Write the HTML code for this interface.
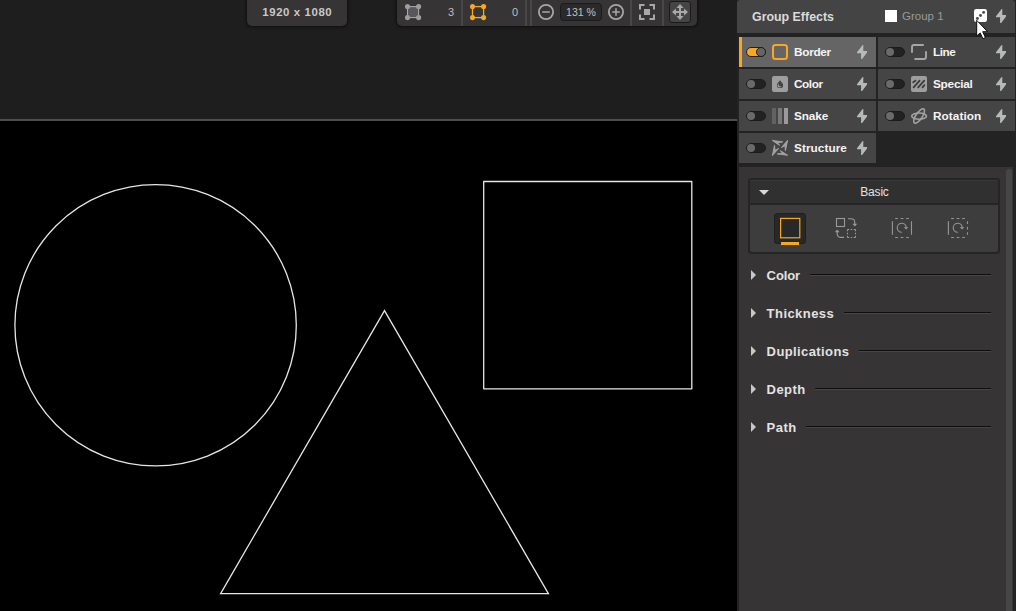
<!DOCTYPE html>
<html>
<head>
<meta charset="utf-8">
<title>Group Effects</title>
<style>
html,body{margin:0;padding:0;}
body{width:1016px;height:611px;overflow:hidden;background:#1e1e1e;position:relative;font-family:"Liberation Sans",sans-serif;}
.abs{position:absolute;}
#canvas{left:0;top:121px;width:737px;height:490px;background:#000;}
#canvasline{left:0;top:119px;width:737px;height:2px;background:#4e4e4e;}
#shapes{left:0;top:0;width:737px;height:611px;}
#respill{left:247px;top:-4px;width:100px;height:29.5px;background:#363435;border-radius:5px;box-shadow:0 0 3px 1px rgba(0,0,0,.55);color:#c8c8c8;font-weight:bold;font-size:11.4px;letter-spacing:0.6px;text-indent:0.6px;text-align:center;line-height:32px;}
#toolbar{left:397px;top:-4px;width:300px;height:29.5px;background:#363435;border-radius:5px;box-shadow:0 0 3px 1px rgba(0,0,0,.55);}
.tdiv{position:absolute;top:0;width:2px;height:25.5px;background:#484848;}
.tnum{position:absolute;top:0;height:24px;line-height:24.5px;font-size:11px;color:#bebebe;text-align:right;}
#zoomfield{left:560px;top:3px;width:40px;height:15.5px;border:1px solid #1a1a1a;background:#2a2a2a;border-radius:3.5px;color:#c0c0c0;font-size:10.5px;text-align:center;line-height:16.5px;}
#movebtn{left:669px;top:1px;width:19.5px;height:19.5px;border:1px solid #1a1a1a;background:#454545;border-radius:3px;}
/* right panel */
#panel{left:737px;top:0;width:279px;height:611px;background:#232323;}
#phead{left:737px;top:0;width:277.6px;height:33px;background:#444444;border-radius:3px 3px 0 0;}
.cell{position:absolute;height:30px;background:#454545;}
.cell.l{left:739px;width:137px;}
.cell.r{left:878px;width:136.6px;}
.cell.sel{background:#656565;}
.cell.sel:before{content:"";position:absolute;left:0;top:0;width:3px;height:30px;background:#f7a81f;}
.tog{position:absolute;left:7px;top:10px;width:18px;height:8px;border:1px solid #1c1c1c;background:#222;border-radius:6px;}
.tog i{position:absolute;left:0;top:0;width:8px;height:8px;border-radius:50%;background:#6a6a6a;}
.tog.on{background:#f7a81f;border-color:#2a2018;}
.tog.on i{left:auto;right:-1px;top:-1px;background:#656565;border:1px solid #1c1c1c;}
.cell .lbl{position:absolute;left:55px;top:-0.5px;line-height:30px;font-size:11.8px;font-weight:bold;color:#f4f4f4;white-space:nowrap;}
.cell svg.ic{position:absolute;left:33px;top:7px;width:16px;height:16px;overflow:visible;}
.cell svg.bolt{position:absolute;top:7.7px;width:10.4px;height:14.5px;}
.cell.l svg.bolt{left:117.9px;}
.cell.r svg.bolt{left:117.8px;}
#pbody{left:739px;top:167px;width:274px;height:444px;background:#363435;}
#scroll{left:1006px;top:169px;width:6px;height:450px;background:#464646;border-radius:3px;}
#basic{left:748px;top:178px;width:248px;height:72px;border:2px solid #252525;border-radius:4px;background:#3d3d3d;overflow:hidden;}
#basichd{left:0;top:0;width:248px;height:23px;background:#303030;box-shadow:inset 0 1px 0 #393939;border-bottom:2px solid #252525;color:#e2e2e2;font-size:12px;text-align:center;line-height:25px;letter-spacing:-0.2px;text-indent:1px;}
#basicsel{left:24px;top:33px;width:30px;height:29px;background:#282828;border:1px solid #1f1f1f;border-radius:3px;}
.sec{position:absolute;left:751px;height:20px;color:#e2e2e2;font-weight:bold;font-size:13px;line-height:20px;white-space:nowrap;}
.sec .tri{position:absolute;left:0;top:5px;width:0;height:0;border-left:5.5px solid #c8c8c8;border-top:5px solid transparent;border-bottom:5px solid transparent;}
.sec span{position:absolute;left:15.6px;top:1px;}
.sline{position:absolute;height:1px;background:#0e0e0e;border-bottom:1px solid #484747;}
</style>
</head>
<body>

<!-- canvas -->
<div id="canvasline" class="abs"></div>
<div id="canvas" class="abs"></div>
<svg id="shapes" class="abs" viewBox="0 0 737 611">
  <g fill="none" stroke="#e6e6e6" stroke-width="1.3">
    <circle cx="155.6" cy="325.25" r="140.7"/>
    <rect x="483.7" y="181.5" width="208.1" height="207.3" stroke-linejoin="round"/>
    <polygon points="384.5,310.6 220.6,593.6 548.4,593.6"/>
  </g>
</svg>

<!-- resolution pill -->
<div id="respill" class="abs">1920 x 1080</div>

<!-- toolbar -->
<div id="toolbar" class="abs"></div>
<div class="abs" style="left:397px;top:0;width:300px;height:26px;">
  <!-- gray point icon -->
  <svg class="abs" style="left:8px;top:4px;" width="17" height="17" viewBox="0 0 17 17">
    <rect x="2.5" y="2.6" width="11.1" height="11" fill="#58585c" stroke="#a6a6a6" stroke-width="1.1"/>
    <circle cx="2.5" cy="2.6" r="2.55" fill="#9e9e9e"/><circle cx="13.6" cy="2.6" r="2.55" fill="#9e9e9e"/>
    <circle cx="2.5" cy="13.6" r="2.55" fill="#9e9e9e"/><circle cx="13.6" cy="13.6" r="2.55" fill="#9e9e9e"/>
  </svg>
  <div class="tnum" style="left:29px;width:28px;">3</div>
  <div class="tdiv" style="left:64px;"></div>
  <svg class="abs" style="left:73px;top:4px;" width="17" height="17" viewBox="0 0 17 17">
    <rect x="2.5" y="2.6" width="11.1" height="11" fill="none" stroke="#f7a81f" stroke-width="1.3"/>
    <circle cx="2.5" cy="2.6" r="2.55" fill="#f7a81f"/><circle cx="13.6" cy="2.6" r="2.55" fill="#f7a81f"/>
    <circle cx="2.5" cy="13.6" r="2.55" fill="#f7a81f"/><circle cx="13.6" cy="13.6" r="2.55" fill="#f7a81f"/>
  </svg>
  <div class="tnum" style="left:93px;width:28px;">0</div>
  <div class="tdiv" style="left:128px;"></div>
  <div class="tdiv" style="left:133px;"></div>
  <!-- minus -->
  <svg class="abs" style="left:141px;top:4px;" width="16" height="16" viewBox="0 0 16 16">
    <circle cx="8" cy="8" r="7.1" fill="none" stroke="#a6a6a6" stroke-width="1.8"/>
    <rect x="4.2" y="7.25" width="7.6" height="1.5" fill="#a8a8a8"/>
  </svg>
  <div id="zoomfield" class="abs" style="left:163px;">131 %</div>
  <!-- plus -->
  <svg class="abs" style="left:211px;top:4px;" width="16" height="16" viewBox="0 0 16 16">
    <circle cx="8" cy="8" r="7.1" fill="none" stroke="#a6a6a6" stroke-width="1.8"/>
    <rect x="4.2" y="7.25" width="7.6" height="1.5" fill="#a8a8a8"/>
    <rect x="7.25" y="4.2" width="1.5" height="7.6" fill="#a8a8a8"/>
  </svg>
  <div class="tdiv" style="left:233px;"></div>
  <!-- focus -->
  <svg class="abs" style="left:242px;top:4px;" width="16" height="16" viewBox="0 0 16 16">
    <g fill="none" stroke="#a8a8a8" stroke-width="2">
      <path d="M1 5.5V1H5.5M10.5 1H15V5.5M15 10.5V15H10.5M5.5 15H1V10.5"/>
    </g>
    <rect x="5" y="5" width="6" height="6" fill="#a8a8a8"/>
  </svg>
  <div class="tdiv" style="left:265px;"></div>
  <div id="movebtn" class="abs" style="left:272px;"></div>
  <svg class="abs" style="left:275px;top:4px;" width="16" height="16" viewBox="0 0 16 16">
    <g fill="#a8a8a8">
      <rect x="7" y="2.5" width="2" height="11"/>
      <rect x="2.5" y="7" width="11" height="2"/>
      <polygon points="8,0 11.6,4 4.4,4"/>
      <polygon points="8,16 11.6,12 4.4,12"/>
      <polygon points="0,8 4,4.4 4,11.6"/>
      <polygon points="16,8 12,4.4 12,11.6"/>
    </g>
  </svg>
</div>

<!-- right panel -->
<div id="panel" class="abs"></div>
<div id="phead" class="abs">
  <div class="abs" style="left:15px;top:0.7px;line-height:33px;font-size:12.4px;font-weight:bold;color:#dadada;white-space:nowrap;">Group Effects</div>
  <div class="abs" style="left:148px;top:10px;width:12px;height:12px;background:#fff;"></div>
  <div class="abs" style="left:165px;top:0;line-height:32px;font-size:11.5px;color:#9a9a9a;white-space:nowrap;">Group 1</div>
  <!-- dice -->
  <svg class="abs" style="left:237px;top:9px;" width="13" height="13" viewBox="0 0 13 13">
    <rect x="0" y="0" width="13" height="13" rx="2.2" fill="#fff"/>
    <circle cx="9.6" cy="3.4" r="1.45" fill="#484848"/>
    <circle cx="6.5" cy="6.5" r="1.45" fill="#484848"/>
    <circle cx="3.4" cy="9.5" r="1.45" fill="#484848"/>
  </svg>
  <svg class="abs" style="left:258.8px;top:8.7px;" width="10.4" height="14.5" viewBox="0 0 10.4 14.5"><path d="M5.6 0H6.3V6.1H10.4V6.9L4.8 14.5H4.1V8.2H0V7.3Z" fill="#b6baba"/></svg>
</div>

<!-- cells -->
<div class="cell l sel" style="top:37px;">
  <div class="tog on"><i></i></div>
  <svg class="ic" viewBox="0 0 16 16"><rect x="1" y="1" width="14" height="14" rx="2.5" fill="none" stroke="#f7a81f" stroke-width="2"/></svg>
  <div class="lbl" style="letter-spacing:-0.3px;">Border</div>
  <svg class="bolt" viewBox="0 0 10.4 14.5"><path d="M5.6 0H6.3V6.1H10.4V6.9L4.8 14.5H4.1V8.2H0V7.3Z" fill="#b6baba"/></svg>
</div>
<div class="cell r" style="top:37px;">
  <div class="tog"><i></i></div>
  <svg class="ic" viewBox="0 0 16 16"><g fill="none" stroke="#a6a6a6" stroke-width="1.9"><path d="M1 8.8V3Q1 1 3 1H12.8"/><path d="M15 7.2V13Q15 15 13 15H3.4"/></g></svg>
  <div class="lbl" style="letter-spacing:-0.5px;">Line</div>
  <svg class="bolt" viewBox="0 0 10.4 14.5"><path d="M5.6 0H6.3V6.1H10.4V6.9L4.8 14.5H4.1V8.2H0V7.3Z" fill="#b6baba"/></svg>
</div>
<div class="cell l" style="top:69px;">
  <div class="tog"><i></i></div>
  <svg class="ic" viewBox="0 0 16 16"><rect x="0" y="0" width="16" height="16" rx="2" fill="#9e9e9e"/><path d="M8 4.2C9.2 6 11.15 7.6 11.15 9.2A3.15 2.9 0 0 1 4.85 9.2C4.85 7.6 6.8 6 8 4.2Z" fill="#454545"/><circle cx="7.55" cy="9.55" r="1.95" fill="#a2a2a2"/><circle cx="8.55" cy="8.6" r="2" fill="#454545"/></svg>
  <div class="lbl" style="letter-spacing:-0.45px;">Color</div>
  <svg class="bolt" viewBox="0 0 10.4 14.5"><path d="M5.6 0H6.3V6.1H10.4V6.9L4.8 14.5H4.1V8.2H0V7.3Z" fill="#b6baba"/></svg>
</div>
<div class="cell r" style="top:69px;">
  <div class="tog"><i></i></div>
  <svg class="ic" viewBox="0 0 16 16"><rect x="0" y="0" width="16" height="16" rx="2" fill="#9e9e9e"/><g stroke="#3c3c3c" stroke-width="1.8" stroke-linecap="round"><path d="M2.2 6.3L4.5 4.6M2.6 11.3L8.6 4.6M7.2 11.3L13.2 4.6M11.5 11.3L13.4 9.2"/></g></svg>
  <div class="lbl" style="letter-spacing:-0.25px;">Special</div>
  <svg class="bolt" viewBox="0 0 10.4 14.5"><path d="M5.6 0H6.3V6.1H10.4V6.9L4.8 14.5H4.1V8.2H0V7.3Z" fill="#b6baba"/></svg>
</div>
<div class="cell l" style="top:101px;">
  <div class="tog"><i></i></div>
  <svg class="ic" viewBox="0 0 16 16"><rect x="0" y="0" width="4" height="16" fill="#626262"/><rect x="6" y="0" width="4" height="16" fill="#787878"/><rect x="12" y="0" width="4" height="16" fill="#9a9a9a"/></svg>
  <div class="lbl" style="letter-spacing:-0.1px;">Snake</div>
  <svg class="bolt" viewBox="0 0 10.4 14.5"><path d="M5.6 0H6.3V6.1H10.4V6.9L4.8 14.5H4.1V8.2H0V7.3Z" fill="#b6baba"/></svg>
</div>
<div class="cell r" style="top:101px;">
  <div class="tog"><i></i></div>
  <svg class="ic" viewBox="0 0 16 16"><g fill="none" stroke="#a2a2a2" stroke-width="1.6"><ellipse cx="8.1" cy="8.1" rx="7.4" ry="3.1"/><ellipse cx="8.1" cy="8" rx="8.4" ry="3.2" transform="rotate(-56 8.1 8)"/></g></svg>
  <div class="lbl" style="letter-spacing:0.05px;">Rotation</div>
  <svg class="bolt" viewBox="0 0 10.4 14.5"><path d="M5.6 0H6.3V6.1H10.4V6.9L4.8 14.5H4.1V8.2H0V7.3Z" fill="#b6baba"/></svg>
</div>
<div class="cell l" style="top:133px;">
  <div class="tog"><i></i></div>
  <svg class="ic" viewBox="0 0 16 16"><g fill="#a4a4a4" stroke="#a4a4a4" stroke-width="0.9" stroke-linejoin="round"><polygon points="0.3,0.4 10.8,1.9 5.7,2.7 7.6,5.4"/><polygon points="15.6,0.3 13.4,10.8 13,5.7 9.5,7.5"/><polygon points="15.7,15.3 5.2,13.9 10.3,13.2 8.3,10.6"/><polygon points="0.4,15.6 2.5,5.2 3,10.3 6.7,8.3"/></g></svg>
  <div class="lbl" style="letter-spacing:0.05px;">Structure</div>
  <svg class="bolt" viewBox="0 0 10.4 14.5"><path d="M5.6 0H6.3V6.1H10.4V6.9L4.8 14.5H4.1V8.2H0V7.3Z" fill="#b6baba"/></svg>
</div>

<!-- panel body -->
<div id="pbody" class="abs"></div>
<div id="scroll" class="abs"></div>
<div id="basic" class="abs">
  <div id="basichd" class="abs">Basic</div>
  <div class="abs" style="left:9px;top:10px;width:0;height:0;border-top:5.5px solid #d8d8d8;border-left:5px solid transparent;border-right:5px solid transparent;"></div>
  <div id="basicsel" class="abs"></div>
  <svg class="abs" style="left:0;top:25px;" width="248" height="47" viewBox="750 205 248 47">
    <!-- icon1 -->
    <rect x="780.6" y="218.4" width="19.2" height="19.4" fill="none" stroke="#f7a81f" stroke-width="1.2"/>
    <rect x="781" y="242" width="18" height="3" fill="#f7a81f"/>
    <!-- icon2 -->
    <g fill="none" stroke="#9a9a9a" stroke-width="1.1">
      <rect x="836.5" y="218.5" width="8" height="8"/>
      <rect x="847.5" y="229.5" width="8" height="8" stroke-dasharray="1.75 1.5 1.5 1.5 1.75 0"/>
      <path d="M848 218.8H851Q854.8 218.8 854.8 222.5V224.5"/>
      <path d="M844 237.4H841Q837.2 237.4 837.2 233.5V231.5"/>
    </g>
    <polygon points="852.4,223.8 857.2,223.8 854.8,226.6" fill="#9a9a9a"/>
    <polygon points="834.8,232.2 839.6,232.2 837.2,229.4" fill="#9a9a9a"/>
    <!-- icon3 -->
    <g fill="none" stroke="#969696" stroke-width="1.1">
      <path d="M892.4 221.2V234.8M911.5 221.2V234.8"/>
      <path d="M895.2 218.5H909M895.2 237.5H909" stroke-dasharray="2.7 2.8"/>
      <path d="M901.9 232.2A4.5 4.5 0 1 1 906.2 227.2"/>
    </g>
    <polygon points="903.7,227.3 908.3,227 906.2,229.5" fill="#969696"/>
    <!-- icon4 -->
    <g fill="none" stroke="#969696" stroke-width="1.1">
      <path d="M948.4 221.2V234.8"/>
      <path d="M967.5 221.2V234.8" stroke-dasharray="2.7 2.8"/>
      <path d="M951.2 218.5H965M951.2 237.5H965" stroke-dasharray="2.7 2.8"/>
      <path d="M957.9 232.2A4.5 4.5 0 1 1 962.2 227.2"/>
    </g>
    <polygon points="959.7,227.3 964.3,227 962.2,229.5" fill="#969696"/>
  </svg>
</div>

<!-- sections -->
<div class="sec" style="top:265px;"><div class="tri"></div><span style="letter-spacing:-0.1px;">Color</span></div>
<div class="sline" style="left:810px;top:274px;width:181px;"></div>
<div class="sec" style="top:303px;"><div class="tri"></div><span style="letter-spacing:0.45px;">Thickness</span></div>
<div class="sline" style="left:844px;top:312px;width:147px;"></div>
<div class="sec" style="top:341px;"><div class="tri"></div><span style="letter-spacing:0.4px;">Duplications</span></div>
<div class="sline" style="left:859px;top:350px;width:132px;"></div>
<div class="sec" style="top:379px;"><div class="tri"></div><span style="letter-spacing:0.45px;">Depth</span></div>
<div class="sline" style="left:815px;top:388px;width:176px;"></div>
<div class="sec" style="top:417px;"><div class="tri"></div><span style="letter-spacing:0.45px;">Path</span></div>
<div class="sline" style="left:806px;top:426px;width:185px;"></div>

<!-- cursor -->
<svg class="abs" style="left:974px;top:18px;" width="16" height="24" viewBox="0 0 16 24">
  <path d="M2.7 2.3V18L6.2 14.9L8.9 20.7L11.4 19.6L8.7 13.7H13.6Z" fill="#fff" stroke="#000" stroke-width="0.9" stroke-linejoin="round"/>
</svg>

</body>
</html>
